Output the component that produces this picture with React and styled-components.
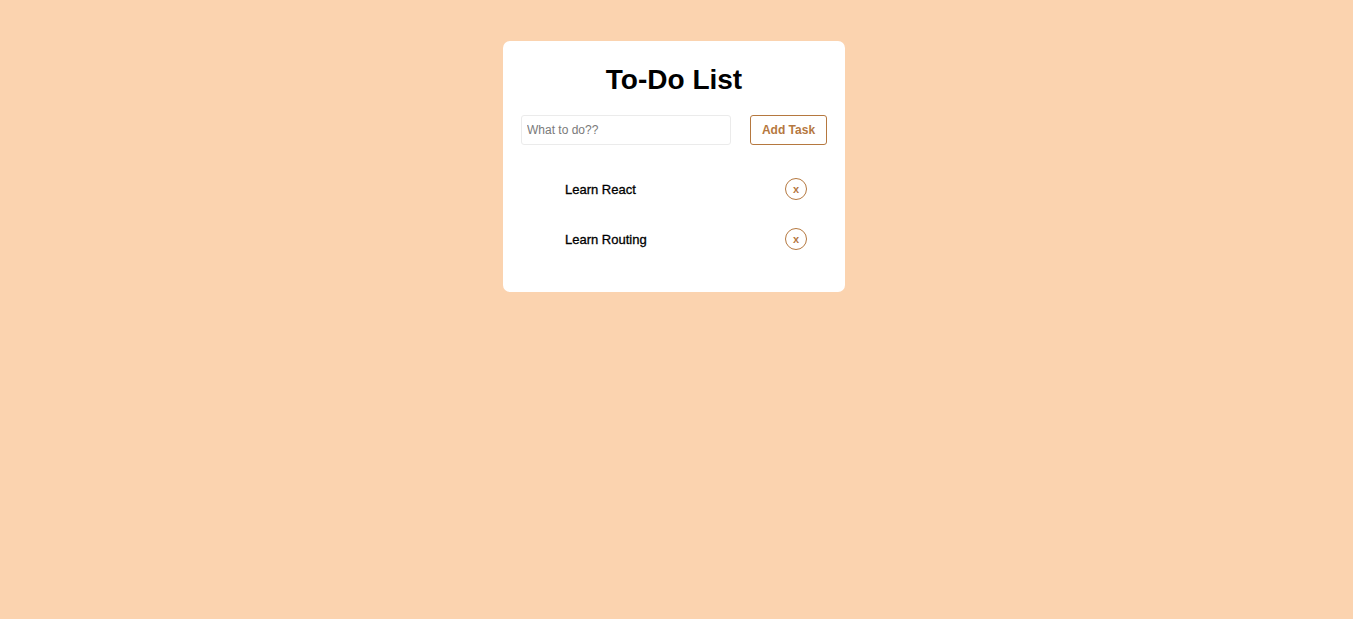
import { useState } from "react";
import styled, { createGlobalStyle } from "styled-components";

const GlobalStyle = createGlobalStyle`
  body {
    margin: 0;
    background-color: #fbd3af;
    font-family: "Liberation Sans", Arial, sans-serif;
  }
`;

const App = () => {
  const [tasks, setTasks] = useState(["Learn React", "Learn Routing"]);
  const [text, setText] = useState("");

  const addTask = () => {
    if (!text.trim()) return;
    setTasks([...tasks, text.trim()]);
    setText("");
  };

  const removeTask = (index) => {
    setTasks(tasks.filter((_, i) => i !== index));
  };

  return (
    <>
      <GlobalStyle />
      <Page>
        <Card>
          <Title>To-Do List</Title>
          <InputRow>
            <TaskInput
              placeholder="What to do??"
              value={text}
              onChange={(e) => setText(e.target.value)}
            />
            <AddButton onClick={addTask}>Add Task</AddButton>
          </InputRow>
          <TaskList>
            {tasks.map((task, i) => (
              <TaskItem key={i}>
                <TaskText>{task}</TaskText>
                <RemoveButton onClick={() => removeTask(i)}>x</RemoveButton>
              </TaskItem>
            ))}
          </TaskList>
        </Card>
      </Page>
    </>
  );
};

const Page = styled.div`
  display: flex;
  justify-content: center;
  align-items: flex-start;
  padding: 41px 5px 0 0;
  min-height: 100vh;
  box-sizing: border-box;
`;

const Card = styled.div`
  width: 342px;
  box-sizing: border-box;
  background: #fff;
  border-radius: 7px;
  padding: 23px 18px 28px;
`;

const Title = styled.h1`
  margin: 0 0 19px;
  text-align: center;
  font-size: 28px;
  line-height: 32px;
  font-weight: 700;
  color: #000;
`;

const InputRow = styled.div`
  display: flex;
  justify-content: space-between;
  align-items: center;
`;

const TaskInput = styled.input`
  width: 210px;
  height: 30px;
  box-sizing: border-box;
  border: 1px solid #ebebeb;
  border-radius: 3px;
  padding: 0 5px;
  font-family: "Liberation Sans", Arial, sans-serif;
  font-size: 12px;
  outline: none;

  &::placeholder {
    color: #7a7a7a;
  }
`;

const AddButton = styled.button`
  width: 77px;
  height: 30px;
  box-sizing: border-box;
  background: #fff;
  border: 1px solid #b5783f;
  border-radius: 3px;
  color: #b5783f;
  font-family: "Liberation Sans", Arial, sans-serif;
  font-size: 12px;
  font-weight: 700;
  cursor: pointer;
`;

const TaskList = styled.ul`
  list-style: none;
  margin: 19px 0 0;
  padding: 0 20px 0 44px;
`;

const TaskItem = styled.li`
  display: flex;
  justify-content: space-between;
  align-items: center;
  height: 50px;
`;

const TaskText = styled.span`
  font-size: 13px;
  color: #000;
  -webkit-text-stroke: 0.3px #000;
`;

const RemoveButton = styled.button`
  width: 22px;
  height: 22px;
  padding: 0;
  border-radius: 50%;
  border: 1px solid #b5783f;
  background: #fff;
  color: #b5783f;
  font-family: "Liberation Sans", Arial, sans-serif;
  font-size: 11px;
  font-weight: 700;
  line-height: 18px;
  cursor: pointer;
`;

export default App;
